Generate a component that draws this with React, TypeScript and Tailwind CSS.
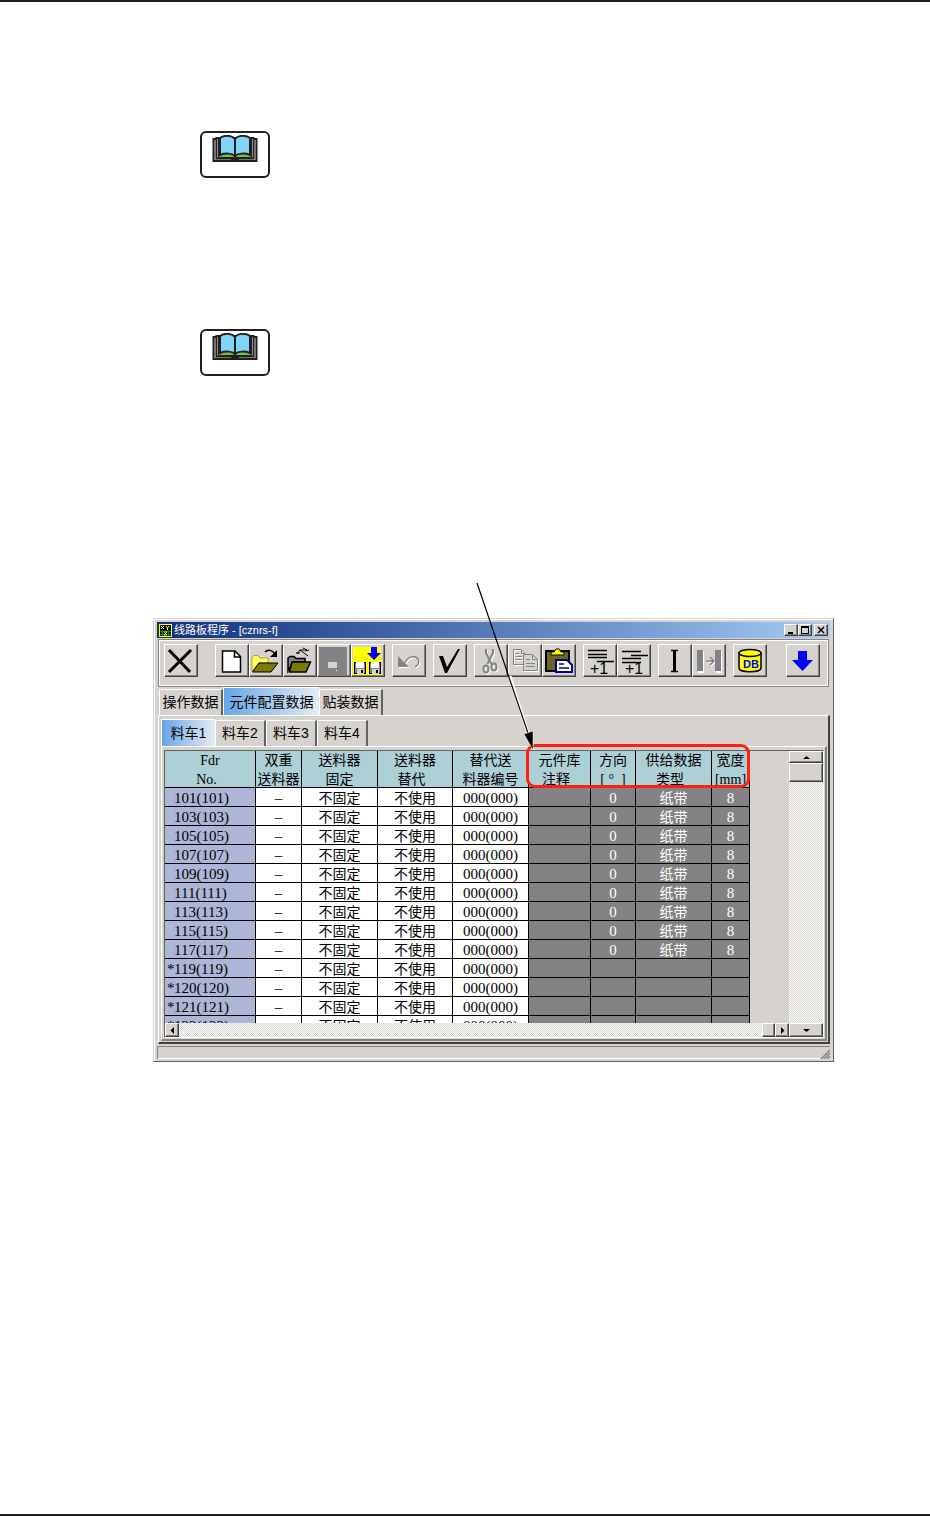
import { useState } from 'react'
import type { ReactNode } from 'react'
import clsx from 'clsx'

const mainTabs = [
  { label: '操作数据', width: 'w-16' },
  { label: '元件配置数据', width: 'w-24' },
  { label: '贴装数据', width: 'w-16' },
]

const carts = ['料车1', '料车2', '料车3', '料车4']

const columns = [
  { lines: ['Fdr', 'No.  '], width: 'w-[91px]' },
  { lines: ['双重', '送料器'], width: 'w-[46px]' },
  { lines: ['送料器', '固定'], width: 'w-[76px]' },
  { lines: ['送料器', '替代  '], width: 'w-[75px]' },
  { lines: ['替代送', '料器编号'], width: 'w-[76px]' },
  { lines: ['元件库', '注释  '], width: 'w-[62px]' },
  { lines: ['方向', '[ °  ]'], width: 'w-[45px]' },
  { lines: ['供给数据', '类型  '], width: 'w-[76px]' },
  { lines: ['宽度', '[mm]'], width: 'w-[38px]' },
]

const feeders = [
  { no: 101, used: true },
  { no: 103, used: true },
  { no: 105, used: true },
  { no: 107, used: true },
  { no: 109, used: true },
  { no: 111, used: true },
  { no: 113, used: true },
  { no: 115, used: true },
  { no: 117, used: true },
  { no: 119, used: false },
  { no: 120, used: false },
  { no: 121, used: false },
  { no: 122, used: false },
]

const raised =
  'border border-t-white border-l-white border-r-[#424142] border-b-[#424142] bg-[#d6d3ce] shadow-[inset_-1px_-1px_0_#848284]'

const dither =
  'bg-[conic-gradient(#ffffff_25%,#d6d3ce_0_50%,#ffffff_0_75%,#d6d3ce_0)] bg-[length:2px_2px]'

function BookMark() {
  return (
    <div className="ml-[200px] flex h-[47px] w-[70px] justify-center rounded-md border-2 border-[#231f20] bg-white pt-0.5">
      <svg width="46" height="28" viewBox="0 0 46 28" aria-hidden="true">
        <path d="M1.5 4V26H44.5V4H1.5z" fill="#c8c6c6" stroke="#231f20" strokeWidth="2" />
        <path d="M4.5 3H41.5V23.5H4.5z" fill="#fff" stroke="#231f20" strokeWidth="2" />
        <path d="M6.5 3H39.5V22.5H6.5z" fill="#72bf44" stroke="#231f20" />
        <path
          d="M23 21C20 18 13 18 8 20V3C12 0 20 0 23 4C26 0 34 0 38 3V20C33 18 26 18 23 21z"
          fill="#7fd4f7"
          stroke="#231f20"
          strokeWidth="2"
        />
        <path d="M23 4V22" stroke="#231f20" strokeWidth="2" />
        <path d="M18 23H28L25 27H21z" fill="#231f20" />
      </svg>
    </div>
  )
}

function ToolButton({
  label,
  disabled,
  className,
  children,
}: {
  label: string
  disabled?: boolean
  className?: string
  children: ReactNode
}) {
  return (
    <button
      type="button"
      aria-label={label}
      disabled={disabled}
      className={clsx('h-[33px] w-[34px] shrink-0', raised, className)}
    >
      <svg width="31" height="31" viewBox="0 0 31 31" fill="none" aria-hidden="true">
        {children}
      </svg>
    </button>
  )
}

function Floppy({ x }: { x: number }) {
  return (
    <g>
      <rect x={x} y="17" width="12" height="12" fill="#000" />
      <rect x={x + 1} y="18" width="10" height="10" fill="#848284" />
      <rect x={x + 2} y="17" width="8" height="6" fill="#fff" />
      <rect x={x + 3} y="24" width="7" height="5" fill="#d6d3ce" />
      <rect x={x + 7} y="25" width="2" height="3" fill="#000" />
    </g>
  )
}

function CopyShape({ color }: { color: string }) {
  return (
    <g stroke={color}>
      <path d="M4.5 4.5H12L16.5 9V19.5H4.5z" />
      <path d="M12.5 4.5V8.5H16M6.5 8.5H10M6.5 11.5H13M6.5 14.5H13" />
      <path d="M14.5 9.5H23L28.5 14V25.5H14.5z" fill="#d6d3ce" />
      <path d="M23.5 9.5V14.5H28M17 14.5H21M17 18.5H26M17 21.5H26" />
    </g>
  )
}

function CutShape({ color }: { color: string }) {
  return (
    <g stroke={color} strokeWidth="2">
      <path d="M11 4V8L16.5 19M18 4V8L12.5 19" />
      <ellipse cx="11" cy="24" rx="2.5" ry="3.5" />
      <ellipse cx="19" cy="22" rx="2.5" ry="3.5" />
    </g>
  )
}

function UndoShape({ color }: { color: string }) {
  return (
    <g>
      <path d="M5 11V22H16L12.5 18.5L10 16z" fill={color} />
      <path d="M12 18C15 11 22 10 25 14C27 17 25 20 22 22" stroke={color} strokeWidth="1.5" />
    </g>
  )
}

function PlusOne({ x }: { x: number }) {
  return (
    <text x={x} y="29" fill="#000" fontSize="16" fontFamily="Liberation Sans, sans-serif" stroke="none">
      +1
    </text>
  )
}

function Toolbar() {
  return (
    <div className="mx-px mt-px border border-[#848284]">
      <div className="flex gap-[7px] border border-white px-1 pt-[3px] pb-2">
        <ToolButton label="关闭" className="mr-[10px]">
          <path d="M4 5L25 27M26 5L4 27" stroke="#000" strokeWidth="3" />
        </ToolButton>

        <div className="flex">
          <ToolButton label="新建">
            <path d="M6.5 6H19L24.5 11.5V27H6.5z" fill="#fff" stroke="#000" strokeWidth="1.5" />
            <path d="M18.5 6V12H25" stroke="#000" strokeWidth="1.5" />
          </ToolButton>
          <ToolButton label="打开">
            <path d="M2 26V12L4 10.5H8L10 13H18V18H9z" fill="#ffff63" stroke="#b5a210" />
            <path d="M2.5 27L9 18H28L21 27z" fill="#7b7900" stroke="#000" />
            <path d="M15 7C18 4 22 5 25 9" stroke="#000" strokeWidth="1.5" />
            <path d="M27 5V12H20z" fill="#000" />
          </ToolButton>
          <ToolButton label="从文件打开">
            <path d="M4 26V13L6 11.5H10L12 13.5H21V17H9z" fill="#848284" stroke="#000" strokeWidth="1.5" />
            <path d="M5.5 27L8 17H26.5L22 27z" fill="#7b7900" stroke="#000" strokeWidth="1.5" />
            <path d="M13 9L16 5H23L19 3M16 5L24 11M12 8H16M21 6L25 5" stroke="#000" />
          </ToolButton>
          <ToolButton label="保存" disabled>
            <rect x="1" y="2" width="28" height="28" fill="#848284" />
            <rect x="10" y="17" width="9" height="6" fill="#d6d3ce" />
            <rect x="18" y="25" width="1" height="1" fill="#fff" />
          </ToolButton>
          <ToolButton label="另存为">
            <rect x="1" y="2" width="28" height="28" fill="#ffff00" />
            <Floppy x={2} />
            <Floppy x={17} />
            <path d="M19 2H25V8H29L22 15L15 8H19z" fill="#0000ff" />
          </ToolButton>
        </div>

        <ToolButton label="撤消" disabled>
          <g transform="translate(1 1)">
            <UndoShape color="#fff" />
          </g>
          <UndoShape color="#848284" />
        </ToolButton>

        <ToolButton label="检查">
          <path d="M5 11H9L13 22L24 4L26 4L13 28H11z" fill="#000" />
        </ToolButton>

        <div className="flex">
          <ToolButton label="剪切" disabled>
            <g transform="translate(1 1)">
              <CutShape color="#fff" />
            </g>
            <CutShape color="#848284" />
          </ToolButton>
          <ToolButton label="复制" disabled>
            <g transform="translate(1 1)">
              <CopyShape color="#fff" />
            </g>
            <CopyShape color="#848284" />
          </ToolButton>
          <ToolButton label="粘贴">
            <rect x="3" y="6" width="23" height="20" fill="#6b6921" stroke="#000" strokeWidth="2" />
            <path d="M8 10V7H11L13 4H16L18 7H21V10z" fill="#ffff00" stroke="#000" />
            <path d="M13 15H24L29 20V27H13z" fill="#fff" stroke="#00008c" strokeWidth="2" />
            <path d="M16 19H21M16 23H26" stroke="#00008c" strokeWidth="1.5" />
          </ToolButton>
        </div>

        <div className="flex">
          <ToolButton label="插入行">
            <path d="M4 5.5H23M4 9.5H23M4 12.5H23M13 16.5H30" stroke="#000" strokeWidth="1.5" />
            <PlusOne x={6} />
          </ToolButton>
          <ToolButton label="追加行">
            <path d="M4 6.5H23M13 10.5H30M4 13.5H23M4 17.5H23" stroke="#000" strokeWidth="1.5" />
            <PlusOne x={7} />
          </ToolButton>
        </div>

        <div className="flex">
          <ToolButton label="编辑">
            <path d="M12 5.5H19M12 26.5H19" stroke="#000" strokeWidth="1.5" />
            <path d="M15.5 5V27" stroke="#000" strokeWidth="3" />
          </ToolButton>
          <ToolButton label="移动" disabled>
            <path d="M5 6H11V28H5zM23 6H29V28H23z" fill="#fff" />
            <path d="M14 17H21M18 13L22 17L18 21" stroke="#fff" strokeWidth="1.5" />
            <path d="M4 5H10V26H4zM22 5H28V26H22z" fill="#848284" />
            <path d="M13 16H20M17 12L21 16L17 20" stroke="#848284" strokeWidth="1.5" />
          </ToolButton>
        </div>

        <ToolButton label="数据库">
          <path d="M5 8V23C5 28 27 28 27 23V8z" fill="#ffff00" stroke="#000" strokeWidth="1.5" />
          <ellipse cx="16" cy="8" rx="11" ry="3.5" fill="#ffff00" stroke="#000" strokeWidth="1.5" />
          <text x="9" y="23" fill="#0000ff" fontSize="11" fontWeight="bold" fontFamily="Liberation Sans, sans-serif">
            DB
          </text>
        </ToolButton>

        <ToolButton label="下载" className="ml-3">
          <path d="M11 6H20V15H26L15.5 26L5 15H11z" fill="#0000ff" />
        </ToolButton>
      </div>
    </div>
  )
}

function Tab({
  label,
  active,
  className,
  onClick,
}: {
  label: string
  active: boolean
  className: string
  onClick: () => void
}) {
  return (
    <button
      type="button"
      role="tab"
      aria-selected={active}
      onClick={onClick}
      className={clsx(
        'shrink-0 border-t border-l border-white text-center text-sm leading-5 whitespace-nowrap',
        active
          ? 'h-full bg-linear-to-r from-[#63a6e7] to-[#e7ebf2]'
          : 'h-[26px] border-r-2 border-r-[#636163] bg-[#d6d3ce] pb-0.5',
        className,
      )}
    >
      {label}
    </button>
  )
}

function FeederTable() {
  const cell = 'border-r border-b border-black p-0'
  const locked = clsx(cell, 'bg-[#848284] text-white')
  const han = 'h-[18px] leading-[22px]'
  const digits = 'h-[18px] text-[15px] leading-5'

  return (
    <table className="w-[585px] table-fixed border-separate border-spacing-0 text-center text-sm">
      <thead>
        <tr className="h-[37px]">
          {columns.map(({ lines, width }) => (
            <th
              key={lines.join()}
              scope="col"
              className={clsx(cell, width, 'bg-[#adcfd6] font-normal whitespace-pre')}
            >
              <div className="h-9 leading-[19px]">
                {lines[0]}
                <br />
                {lines[1]}
              </div>
            </th>
          ))}
        </tr>
      </thead>
      <tbody>
        {feeders.map(({ no, used }) => (
          <tr key={no} className="h-[19px]">
            <th scope="row" className={clsx(cell, 'bg-[#adb6d6] text-left font-normal')}>
              <div className={clsx(digits, 'pl-0.5')}>
                <span className="inline-block w-[7px]">{used ? '' : '*'}</span>
                {no}({no})
              </div>
            </th>
            <td className={clsx(cell, 'bg-white')}>
              <div className={digits}>–</div>
            </td>
            <td className={clsx(cell, 'bg-white')}>
              <div className={han}>不固定</div>
            </td>
            <td className={clsx(cell, 'bg-white')}>
              <div className={han}>不使用</div>
            </td>
            <td className={clsx(cell, 'bg-white')}>
              <div className={digits}>000(000)</div>
            </td>
            <td className={locked} />
            <td className={locked}>
              <div className={digits}>{used && '0'}</div>
            </td>
            <td className={locked}>
              <div className={han}>{used && '纸带'}</div>
            </td>
            <td className={locked}>
              <div className={digits}>{used && '8'}</div>
            </td>
          </tr>
        ))}
      </tbody>
    </table>
  )
}

function ScrollButton({ label, className, path }: { label: string; className: string; path: string }) {
  return (
    <button
      type="button"
      aria-label={label}
      className={clsx('flex shrink-0 items-center justify-center', raised, className)}
    >
      <svg width="7" height="7" viewBox="0 0 7 7" aria-hidden="true">
        <path d={path} fill="#000" />
      </svg>
    </button>
  )
}

function TitleBar() {
  const control = clsx('flex h-3 w-[14px] items-center justify-center', raised)

  return (
    <header className="flex h-4 items-center bg-linear-to-r from-[#10307b] to-[#a5cbf7] px-0.5 text-white">
      <svg width="13" height="13" viewBox="0 0 13 13" aria-hidden="true">
        <rect width="13" height="13" fill="#ffff00" />
        <rect x="1" y="1" width="11" height="11" fill="#000" />
        <path d="M2 2L5 5M5 2L2 5M7 2L8.5 4L10 2M8.5 4V6" stroke="#ffff00" fill="none" />
        <path d="M1 7.5H12M1 10.5H12M3.5 6V12M9.5 6V12" stroke="#009a00" fill="none" />
        <path d="M5 8H8L5 11H8" stroke="#ffff00" fill="none" />
      </svg>
      <h1 className="ml-0.5 flex-1 text-[11px] leading-4 whitespace-nowrap">线路板程序 - [cznrs-f]</h1>
      <button type="button" aria-label="最小化" className={control}>
        <svg width="8" height="8" viewBox="0 0 8 8" aria-hidden="true">
          <path d="M1 6H6V8H1z" fill="#000" />
        </svg>
      </button>
      <button type="button" aria-label="最大化" className={control}>
        <svg width="8" height="8" viewBox="0 0 8 8" aria-hidden="true">
          <path d="M0 0H8V8H0zM1 2V7H7V2z" fill="#000" fillRule="evenodd" />
        </svg>
      </button>
      <button type="button" aria-label="关闭窗口" className={clsx(control, 'ml-0.5')}>
        <svg width="8" height="8" viewBox="0 0 8 8" aria-hidden="true">
          <path d="M1 1L7 7M7 1L1 7" stroke="#000" strokeWidth="1.5" />
        </svg>
      </button>
    </header>
  )
}

function Callout() {
  return (
    <>
      <div className="pointer-events-none absolute top-[126px] left-[373px] h-11 w-56 rounded-[9px] border-[3px] border-[#ff2010]" />
      <svg
        className="pointer-events-none absolute -top-9 left-[320px]"
        width="66"
        height="170"
        viewBox="0 0 66 170"
        aria-hidden="true"
      >
        <path d="M37 94L59 164" stroke="#fff" strokeWidth="3" />
        <path d="M4 1L57 157" stroke="#000" strokeWidth="1.2" />
        <path d="M60 168L51 152L60 149z" fill="#000" stroke="#fff" strokeWidth="0.5" />
      </svg>
    </>
  )
}

export default function App() {
  const [mainTab, setMainTab] = useState(1)
  const [cart, setCart] = useState(0)

  return (
    <main className="min-h-screen border-y-2 border-[#231f20] bg-white pt-[129px] font-['Liberation_Serif','Noto_Sans_CJK_SC',serif] text-black">
      <BookMark />
      <div className="mt-[151px]">
        <BookMark />
      </div>

      <section className="relative mt-[242px] mr-24 ml-[153px]">
        <div className="border border-t-[#d6d3ce] border-r-[#636163] border-b-[#636163] border-l-[#d6d3ce] bg-[#d6d3ce] p-[3px] pb-0.5 font-['Liberation_Sans','Noto_Sans_CJK_SC',sans-serif] shadow-[inset_1px_1px_0_#ffffff]">
          <TitleBar />
          <Toolbar />

          <div role="tablist" className="flex h-7 items-end pl-0.5">
            {mainTabs.map(({ label, width }, i) => (
              <Tab
                key={label}
                label={label}
                active={mainTab === i}
                className={width}
                onClick={() => setMainTab(i)}
              />
            ))}
          </div>

          <div className="ml-px border-t border-r-2 border-b-2 border-l border-t-white border-r-[#424142] border-b-[#424142] border-l-white pt-[3px] pr-px pb-px pl-0.5">
            <div role="tablist" className="flex h-[27px] items-end">
              {carts.map((label, i) => (
                <Tab
                  key={label}
                  label={label}
                  active={cart === i}
                  className={cart === i ? 'w-[54px]' : 'w-[51px]'}
                  onClick={() => setCart(i)}
                />
              ))}
            </div>

            <div className="border-t border-r-2 border-b-2 border-l border-t-white border-r-[#848284] border-b-[#848284] border-l-white pt-[3px] pr-px pb-px pl-0.5">
              <div className="flex border border-t-[#636163] border-r-white border-b-white border-l-[#636163]">
                <div className="min-w-0 flex-1">
                  <div className="h-[272px] overflow-hidden font-['Liberation_Serif','Noto_Sans_CJK_SC',serif]">
                    <FeederTable />
                  </div>
                  <div className={clsx('flex h-[14px]', dither)}>
                    <ScrollButton label="向左滚动" className="w-[14px]" path="M5 0V7L1.5 3.5z" />
                    <div className="flex-1" />
                    <div className={clsx('w-[13px]', raised)} />
                    <ScrollButton label="向右滚动" className="w-[14px]" path="M2 0V7L5.5 3.5z" />
                  </div>
                </div>
                <div className={clsx('flex w-[34px] flex-col', dither)}>
                  <ScrollButton label="向上滚动" className="h-3" path="M0 5H7L3.5 2z" />
                  <div className={clsx('h-[19px]', raised)} />
                  <div className="flex-1" />
                  <ScrollButton label="向下滚动" className="h-[14px]" path="M0 2H7L3.5 5z" />
                </div>
              </div>
            </div>
          </div>

          <footer className="mt-0.5 flex h-[13px] items-end justify-end border-t border-l border-[#848284] bg-[#d6d3ce]">
            <div className="flex-1 border-b border-white" />
            <svg width="10" height="10" viewBox="0 0 10 10" aria-hidden="true">
              <path d="M1 10L10 1M4 10L10 4M7 10L10 7" stroke="#848284" strokeWidth="1.5" />
            </svg>
          </footer>
        </div>

        <Callout />
      </section>
    </main>
  )
}
